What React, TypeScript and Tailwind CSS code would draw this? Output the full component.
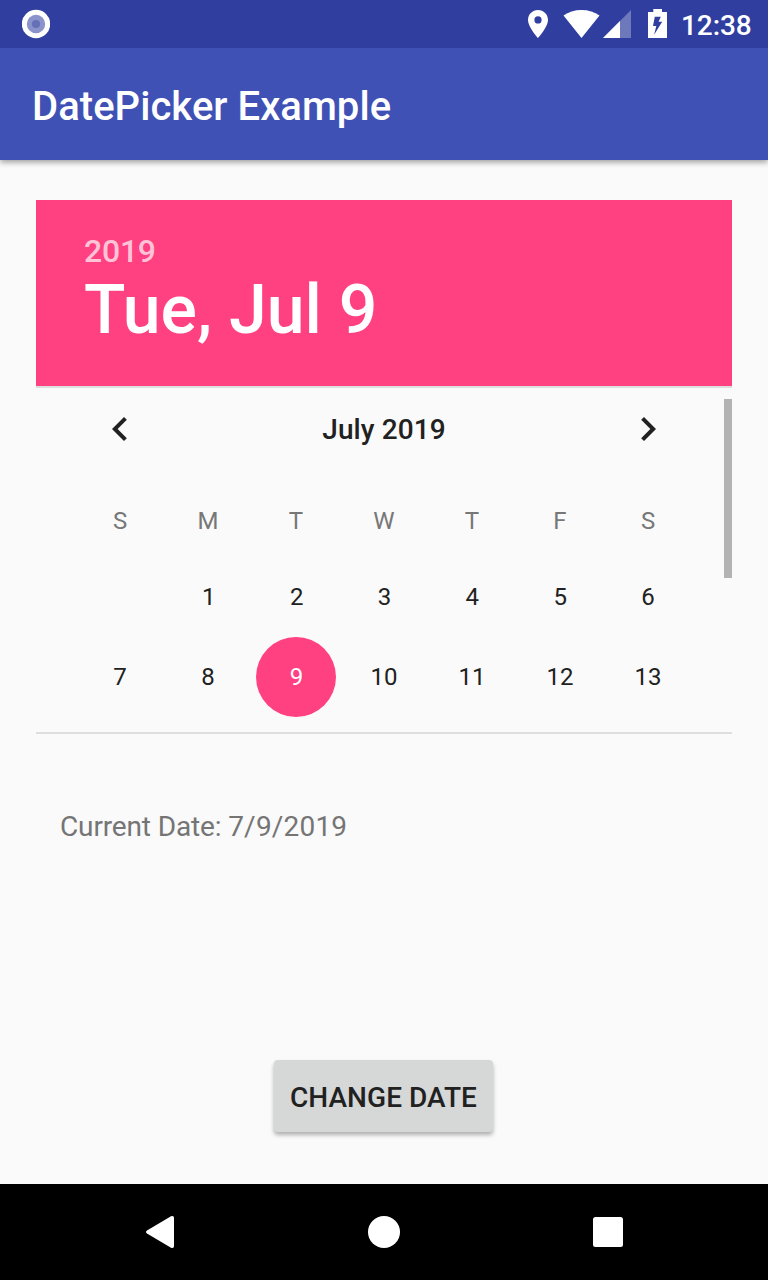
import React from "react";

const weekdays = ["S", "M", "T", "W", "T", "F", "S"];
const firstWeek = ["", "1", "2", "3", "4", "5", "6"];
const secondWeek = ["7", "8", "9", "10", "11", "12", "13"];

function StatusBar() {
  return (
    <div className="relative z-10 flex h-12 shrink-0 items-center justify-between bg-[#303f9f] pr-[15px] pl-[22px]">
      <svg width="28" height="48" viewBox="0 0 28 48">
        <circle cx="14" cy="24" r="14.2" fill="#fff" />
        <circle cx="14" cy="24" r="9.2" fill="#8b93cb" />
        <circle cx="14" cy="24" r="4.1" fill="#6670b8" />
      </svg>
      <div className="flex items-center">
        <svg width="155" height="48" viewBox="526 0 155 48" fill="#fff">
          <path d="M538 10c-5.600 0-10 4.400-10 9.900 0 7.100 10 18.100 10 18.100s10-11 10-18.100c0-5.500-4.400-9.900-10-9.900zm0 13.500a3.600 3.600 0 1 1 0-7.200 3.600 3.600 0 0 1 0 7.200z" />
          <path d="M581.500 38L563.500 15.500C568.500 12 574.500 10 581.500 10s13 2 18 5.500z" />
          <path d="M631 10v28h-28z" opacity=".3" />
          <path d="M620 21v17h-17z" />
          <path fillRule="evenodd" d="M653.300 9h8.700v3h5v26h-19V12h5.300zm1.500 7.700l-1.800 9.300h3.300l-2.200 8.700 8.100-12.900h-3.600l2.200-5.100z" />
        </svg>
        <span className="w-[72px] pt-1 text-[28px] leading-8 font-medium tracking-[-0.1px] text-white">12:38</span>
      </div>
    </div>
  );
}

function Week({ days, className }: { days: string[]; className: string }) {
  return (
    <div className={`grid grid-cols-7 text-center text-[24px] ${className}`}>
      {days.map((d, i) => (
        <div key={i} className={d === "9" ? "mx-auto size-20 rounded-full bg-[#ff4081] pl-px text-white" : ""}>{d}</div>
      ))}
    </div>
  );
}

export default function App() {
  return (
    <div className="flex h-[1280px] w-[768px] flex-col overflow-hidden bg-[#fafafa] font-[Roboto,sans-serif] text-[#212121]">
      <StatusBar />
      <header className="flex h-28 shrink-0 items-center bg-[#3f51b5] pt-1.5 pl-8 text-[40px] font-medium tracking-[0.05px] text-white shadow-[0_2px_6px_rgba(0,0,0,0.4)]">
        DatePicker Example
      </header>
      <main className="flex flex-1 flex-col px-9 pt-10">
        <section className="h-[186px] bg-[#ff4081] px-12 pt-[31px] text-white">
          <div className="text-[32px] leading-10 font-medium tracking-[-0.25px] text-white/70">2019</div>
          <div className="text-[68px] leading-[78px] font-medium">Tue, Jul 9</div>
        </section>
        <section className="relative h-[348px] border-y-2 border-[#dedede] px-10">
          <div className="flex h-[82px] items-center justify-between px-5">
            <svg width="48" height="48" viewBox="0 0 24 24" fill="#212121"><path d="M15.410 7.410L14 6l-6 6 6 6 1.410-1.410L10.830 12z" /></svg>
            <span className="pt-0.5 text-[28px] font-medium tracking-[0.1px]">July 2019</span>
            <svg width="48" height="48" viewBox="0 0 24 24" fill="#212121"><path d="M10 6L8.590 7.410 13.170 12l-4.580 4.590L10 18l6-6z" /></svg>
          </div>
          <Week days={weekdays} className="pt-[11px] leading-[80px] text-[#777777]" />
          <Week days={firstWeek} className="-mt-1 pl-px leading-[80px]" />
          <Week days={secondWeek} className="leading-[80px]" />
          <div className="absolute top-[11px] right-0 h-[179px] w-2 bg-[#b3b3b3]" />
        </section>
        <p className="mt-[77px] pl-6 text-[28px] leading-8 text-[#757575]">
          <span className="tracking-[-0.14px]">Current Date: </span>
          <span className="tracking-[0.2px]">7/9/2019</span>
        </p>
        <button className="mt-[217px] ml-[238px] h-[72px] w-[219px] rounded-[4px] bg-[#d6d7d7] pt-[3px] text-[28px] font-medium tracking-[0.05px] shadow-[0_3px_4px_rgba(0,0,0,0.3)]">CHANGE DATE</button>
      </main>
      <nav className="h-24 shrink-0 bg-black">
        <svg width="768" height="96" viewBox="0 0 768 96" fill="#fff">
          <path d="M147 46.500L171 32.300Q174 31 174 34V62Q174 65 171 63.700L147 49.500Q145 48 147 46.500Z" />
          <circle cx="384" cy="48" r="16" />
          <rect x="593" y="33" width="30" height="30" rx="2.500" />
        </svg>
      </nav>
    </div>
  );
}
